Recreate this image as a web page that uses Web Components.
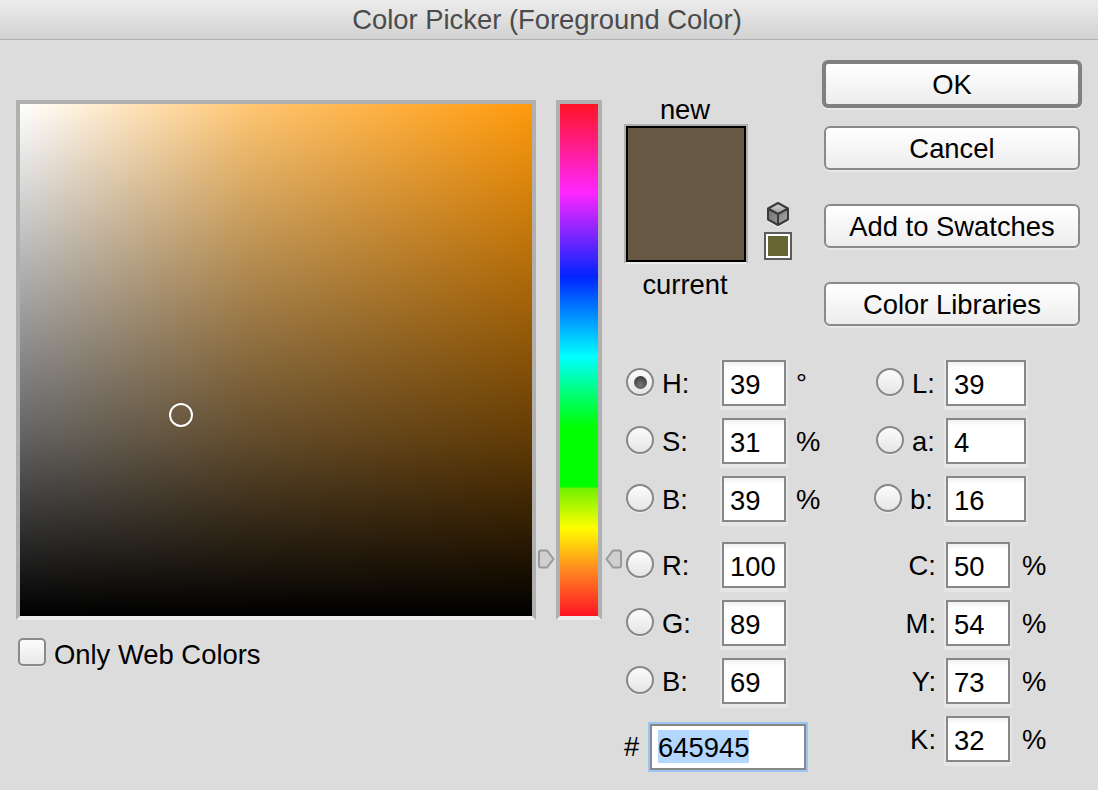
<!DOCTYPE html>
<html>
<head>
<meta charset="utf-8">
<title>Color Picker</title>
<style>
    html, body { margin: 0; padding: 0; background: #dcdcdc; }
    body { font-family: "Liberation Sans", Arial, sans-serif; font-size: 27.4px; color: #000; }
</style>
</head>
<body>

<cp-dialog>
    <cp-titlebar slot="title">Color Picker (Foreground Color)</cp-titlebar>

    <cp-color-field slot="field"></cp-color-field>
    <cp-checkbox slot="field">Only Web Colors</cp-checkbox>

    <cp-hue-bar slot="hue"></cp-hue-bar>

    <cp-preview slot="preview"></cp-preview>

    <cp-button slot="buttons" default>OK</cp-button>
    <cp-button slot="buttons">Cancel</cp-button>
    <cp-button slot="buttons">Add to Swatches</cp-button>
    <cp-button slot="buttons">Color Libraries</cp-button>

    <cp-value slot="hsb" radio checked label="H:" value="39" unit="°"></cp-value>
    <cp-value slot="hsb" radio label="S:" value="31" unit="%"></cp-value>
    <cp-value slot="hsb" radio label="B:" value="39" unit="%"></cp-value>

    <cp-value slot="rgb" radio label="R:" value="100"></cp-value>
    <cp-value slot="rgb" radio label="G:" value="89"></cp-value>
    <cp-value slot="rgb" radio label="B:" value="69"></cp-value>
    <cp-hex slot="rgb" value="645945"></cp-hex>

    <cp-value slot="lab" class="lab" radio label="L:" value="39"></cp-value>
    <cp-value slot="lab" class="lab" radio label="a:" value="4"></cp-value>
    <cp-value slot="lab" class="lab nudge" radio label="b:" value="16"></cp-value>

    <cp-value slot="cmyk" class="cmyk" label="C:" value="50" unit="%"></cp-value>
    <cp-value slot="cmyk" class="cmyk" label="M:" value="54" unit="%"></cp-value>
    <cp-value slot="cmyk" class="cmyk" label="Y:" value="73" unit="%"></cp-value>
    <cp-value slot="cmyk" class="cmyk" label="K:" value="32" unit="%"></cp-value>
</cp-dialog>

<script>
    // small helper so every element below stays short
    function defineElement(name, css, html) {
        customElements.define(name, class extends HTMLElement {
            constructor() {
                super()
                const root = this.attachShadow({mode: 'open'})
                const body = typeof html === 'function' ? html(this) : html
                root.innerHTML = `<style>${css}</style>${body}`
            }
        })
    }

    defineElement('cp-dialog', `
        :host { display: block; width: 1098px; height: 790px; overflow: hidden; }
        .main { display: flex; padding: 20px 0 0 16px; }
        .left { display: flex; flex-direction: column; width: 520px; margin-top: 40px; }
        .hue { display: block; margin: 40px 22px 0 20px; }
        .right { width: 458px; }
        .top { display: flex; height: 300px; }
        .buttons { display: flex; flex-direction: column; width: 260px; }
        .values { display: flex; }
        .col-a { width: 250px; display: flex; flex-direction: column; }
        .col-b { width: 208px; display: flex; flex-direction: column; }
        .stack { display: flex; flex-direction: column; gap: 12px; }
        .stack + .stack { margin-top: 20px; }
    `, `
        <slot name="title"></slot>
        <div class="main">
            <div class="left"><slot name="field"></slot></div>
            <div class="hue"><slot name="hue"></slot></div>
            <div class="right">
                <div class="top">
                    <slot name="preview"></slot>
                    <div class="buttons"><slot name="buttons"></slot></div>
                </div>
                <div class="values">
                    <div class="col-a">
                        <div class="stack"><slot name="hsb"></slot></div>
                        <div class="stack"><slot name="rgb"></slot></div>
                    </div>
                    <div class="col-b">
                        <div class="stack"><slot name="lab"></slot></div>
                        <div class="stack"><slot name="cmyk"></slot></div>
                    </div>
                </div>
            </div>
        </div>
    `)

    defineElement('cp-titlebar', `
        :host {
            display: block;
            height: 39px;
            line-height: 39px;
            padding-right: 4px;
            text-align: center;
            color: #4b4b4b;
            background: linear-gradient(#ececec, #d2d2d2);
            border-bottom: 1px solid #b2b2b2;
        }
    `, `<slot></slot>`)

    defineElement('cp-color-field', `
        :host { display: block; width: 520px; height: 520px; box-sizing: border-box; position: relative;
            border: 4px solid #b0b0b0; border-bottom-color: #ececec; }
        .plane { width: 100%; height: 100%;
            background:
                linear-gradient(to top, #000, rgba(0,0,0,.61) 35%, rgba(0,0,0,.33) 65%, rgba(0,0,0,0)),
                linear-gradient(to right, #fff, #ffc672 45%, #ff9a0c); }
        .marker { position: absolute; left: 149px; top: 299px; width: 20px; height: 20px;
            border: 2px solid #fff; border-radius: 50%; box-shadow: 0 0 1px rgba(0,0,0,.5); }
    `, `<div class="plane"></div><div class="marker"></div>`)

    defineElement('cp-hue-bar', `
        :host { display: block; width: 46px; height: 520px; box-sizing: border-box; position: relative;
            border: 4px solid #b0b0b0; border-bottom-color: #ececec; }
        .ramp { width: 100%; height: 100%;
            background: linear-gradient(#ff1424 0%, #ff26ff 17.2%, #0024ff 33.8%, #00ffff 49.4%, #00ff80 56%, #00ff00 63.3%, #00ff00 74.800%, #70f000 75%, #ffff00 82.8%, #ff8820 91%, #ff1424 100%); }
        svg { position: absolute; top: 445px; width: 18px; height: 20px; }
        .l { left: -22px; }
        .r { left: 44px; transform: scaleX(-1); }
    `, `
        <div class="ramp"></div>
        <svg class="l" viewBox="0 0 18 20"><path d="M3 1.500h6l6.500 8.500-6.500 8.500h-6q-2 0-2-2v-13q0-2 2-2z" fill="#cfcfcf" stroke="#999" stroke-width="2" stroke-linejoin="round"/></svg>
        <svg class="r" viewBox="0 0 18 20"><path d="M3 1.500h6l6.500 8.500-6.500 8.500h-6q-2 0-2-2v-13q0-2 2-2z" fill="#cfcfcf" stroke="#999" stroke-width="2" stroke-linejoin="round"/></svg>
    `)

    defineElement('cp-preview', `
        :host { display: grid; grid-template-columns: 124px 28px; column-gap: 16px; align-content: start; width: 198px; padding-top: 36px; box-sizing: border-box; }
        .label { text-align: center; height: 28px; line-height: 28px; padding-right: 2px; }
        .now { margin-top: 7px; }
        .box { width: 124px; height: 140px; box-sizing: border-box; border: 2px solid #b0b0b0; border-bottom-color: #ececec; }
        .fill { height: 100%; box-sizing: border-box; background: #675843; border: 2px solid #000; }
        .side { display: flex; flex-direction: column; align-items: center; justify-content: flex-end; padding-bottom: 4px; gap: 6px; }
        svg { display: block; width: 22px; height: 24px; filter: drop-shadow(0 1px 0 #eee); }
        .chip { width: 28px; height: 28px; box-sizing: border-box; border: 2px solid #5c5c5c; }
        .chip div { height: 100%; box-sizing: border-box; border: 2px solid #fff; background: #686632; background-clip: padding-box; }
    `, `
        <div class="label">new</div><div></div>
        <div class="box"><div class="fill"></div></div>
        <div class="side">
            <svg viewBox="0 0 22 24">
                <defs>
                    <linearGradient id="t" x1="0" y1="0" x2="0" y2="1"><stop offset="0" stop-color="#d8d8d8"/><stop offset="1" stop-color="#9a9a9a"/></linearGradient>
                    <linearGradient id="f" x1="0" y1="0" x2="1" y2="1"><stop offset="0" stop-color="#666"/><stop offset="1" stop-color="#aaa"/></linearGradient>
                </defs>
                <path d="M11 1 21 6.500V17.500L11 23 1 17.500V6.500z" fill="url(#f)"/>
                <path d="M11 1 21 6.500 11 12 1 6.500z" fill="url(#t)"/>
                <path d="M11 1 21 6.500V17.500L11 23 1 17.500V6.500zM1 6.500 11 12 21 6.500M11 12V23" fill="none" stroke="#3a3a3a" stroke-width="2" stroke-linejoin="round"/>
            </svg>
            <div class="chip"><div></div></div>
        </div>
        <div class="label now">current</div><div></div>
    `)

    defineElement('cp-button', `
        :host { display: block; height: 44px; margin: 0 2px 34px; box-sizing: border-box; text-align: center; line-height: 41px;
            border: 2px solid #8a8a8a; border-radius: 6px; background: linear-gradient(#ffffff, #ededed);
            box-shadow: 0 2px 0 #e8e8e8; }
        :host([default]) { height: 48px; margin: 0 0 18px; border-width: 4px; border-color: #808080; line-height: 42px; }
    `, `<slot></slot>`)

    defineElement('cp-checkbox', `
        :host { display: flex; align-items: center; margin: 18px 0 0 2px; height: 28px; }
        .box { width: 28px; height: 28px; box-sizing: border-box; margin-right: 8px; border: 2px solid #8a8a8a; border-radius: 5px;
            background: linear-gradient(#fbfbfb, #e9e9e9); box-shadow: 0 1px 0 #eaeaea; }
        .text { padding-top: 6px; }
    `, `<div class="box"></div><div class="text"><slot></slot></div>`)

    defineElement('cp-value', `
        :host { display: flex; align-items: center; height: 46px; --label: 68px; --unit: 10px; }
        :host(.lab) { --label: 42px; }
        :host(.nudge) { --label: 44px; margin-left: -2px; }
        :host(.cmyk) { --label: 72px; --unit: 12px; }
        .radio { width: 28px; height: 28px; box-sizing: border-box; margin: 0 0 2px 2px; flex: none; display: grid; place-items: center;
            border: 2px solid #888; border-radius: 50%; background: linear-gradient(#fbfbfb, #e6e6e6); box-shadow: 0 1px 0 #ececec; }
        .dot { width: 13px; height: 13px; border-radius: 50%; background: radial-gradient(circle at 50% 70%, #777, #2e2e2e); }
        .label { flex: none; width: var(--label); box-sizing: border-box; padding: 2px 0 0 8px; }
        :host(.cmyk) .label { text-align: right; padding: 2px 10px 0 0; }
        .input { flex: none; width: 64px; height: 46px; box-sizing: border-box; line-height: 46px; padding-left: 6px;
            border: 2px solid #888; background: linear-gradient(#f0f0f0, #fff 6px); box-shadow: 0 2px 0 2px #e6e6e6; }
        :host(.lab) .input { width: 80px; }
        .unit { margin-left: var(--unit); flex: none; padding-top: 2px; }
    `, (el) => {
        const checked = el.hasAttribute('checked')
        const unit = el.getAttribute('unit')
        return `
            ${el.hasAttribute('radio') ? `<div class="radio">${checked ? '<div class="dot"></div>' : ''}</div>` : ''}
            <div class="label">${el.getAttribute('label')}</div>
            <div class="input">${el.getAttribute('value')}</div>
            ${unit ? `<div class="unit">${unit}</div>` : ''}
        `
    })

    defineElement('cp-hex', `
        :host { display: flex; align-items: center; height: 50px; margin-top: 6px; }
        .hash { width: 24px; }
        .input { width: 160px; height: 50px; box-sizing: border-box; padding: 6px 0 0 8px;
            border: 2px solid #9cc6f0; box-shadow: inset 0 0 0 2px #888; background: #fff; }
        .sel { display: inline-block; background: #b3d7ff; height: 33px; line-height: 35px; }
    `, (el) => `
        <div class="hash">#</div>
        <div class="input"><span class="sel">${el.getAttribute('value')}</span></div>
    `)
</script>
</body>
</html>
